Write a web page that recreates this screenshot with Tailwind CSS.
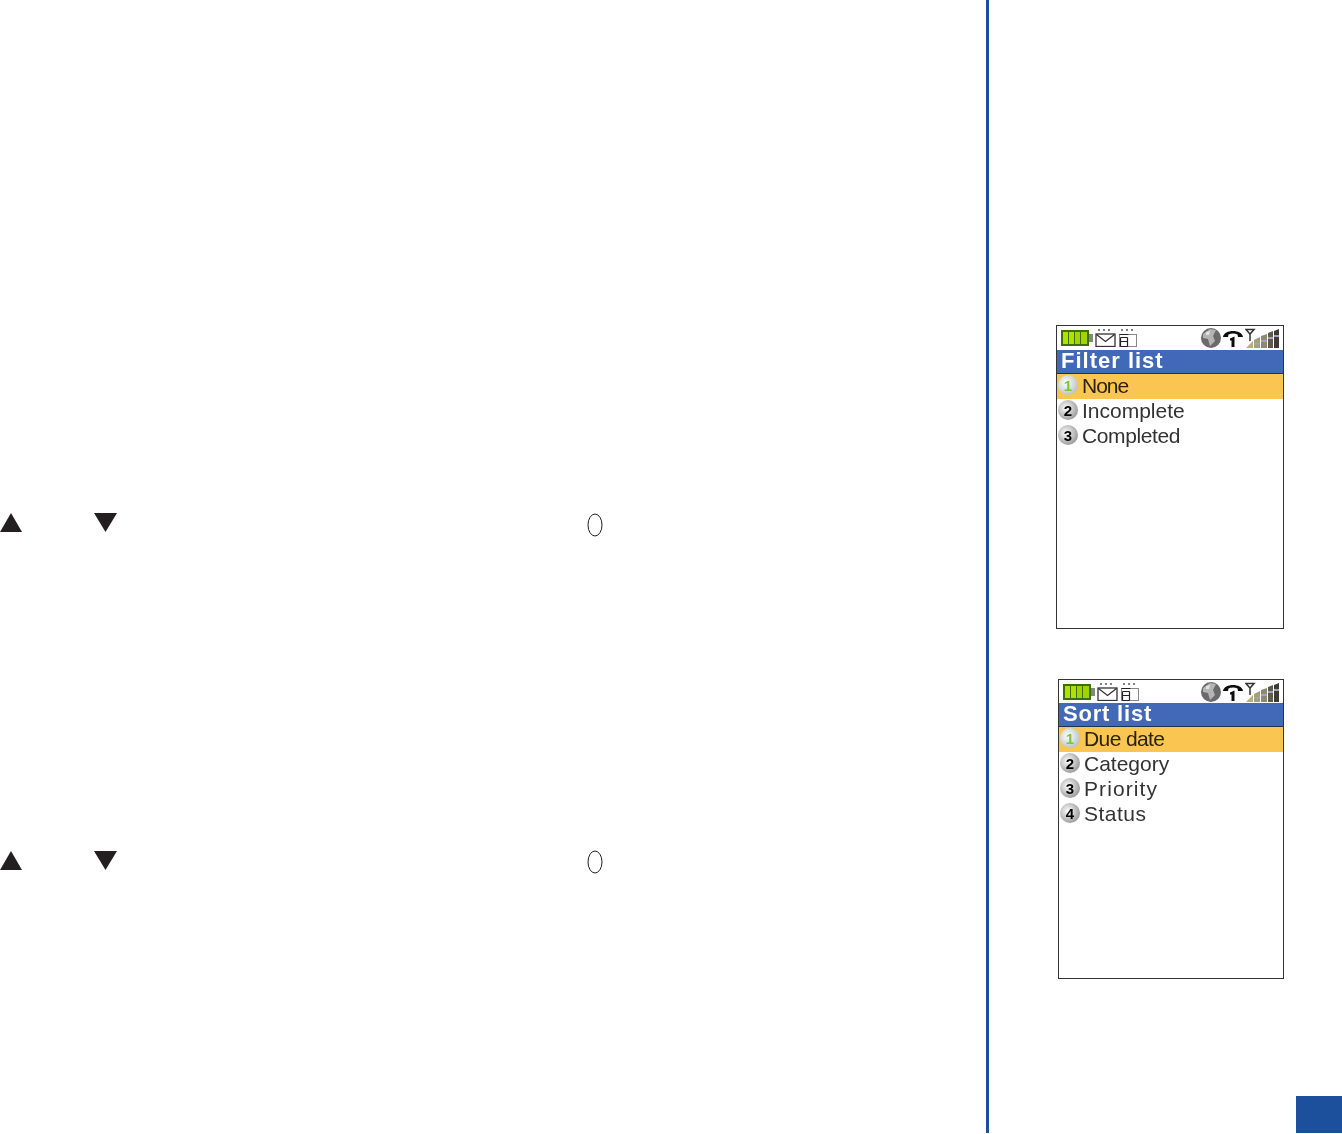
<!doctype html>
<html lang="en">
<head>
  <meta charset="UTF-8" />
  <script src="https://cdn.jsdelivr.net/npm/@tailwindcss/browser@4"></script>
  <title>Filter and sort list</title>
</head>
<body class="bg-white font-['Liberation_Sans',sans-serif]">
  <div class="flex h-[1134px] w-[1342px] overflow-hidden">

    <!-- Left column: key symbols -->
    <main class="w-[986px] shrink-0 pt-[513px]">
      <div class="flex h-[24px] items-start">
        <svg width="22" height="20" viewBox="0 0 22 20"><path d="M11 0 L22 19 L0 19 Z" fill="#231f20"/></svg>
        <svg class="ml-[72px]" width="23" height="20" viewBox="0 0 23 20"><path d="M0 0 L23 0 L11.5 19 Z" fill="#231f20"/></svg>
        <svg class="ml-[470px]" width="16" height="24" viewBox="0 0 16 24"><ellipse cx="8" cy="12" rx="7" ry="11" fill="none" stroke="#231f20" stroke-width="1"/></svg>
      </div>
      <div class="mt-[313px] flex h-[24px] items-start">
        <svg class="mt-px" width="22" height="20" viewBox="0 0 22 20"><path d="M11 0 L22 19 L0 19 Z" fill="#231f20"/></svg>
        <svg class="ml-[72px] mt-px" width="23" height="20" viewBox="0 0 23 20"><path d="M0 0 L23 0 L11.5 19 Z" fill="#231f20"/></svg>
        <svg class="ml-[470px]" width="16" height="24" viewBox="0 0 16 24"><ellipse cx="8" cy="12" rx="7" ry="11" fill="none" stroke="#231f20" stroke-width="1"/></svg>
      </div>
    </main>

    <!-- Divider -->
    <div class="mb-px w-[3px] shrink-0 bg-[#1c4f9c]"></div>

    <!-- Right column: phone screens -->
    <aside class="flex w-[353px] shrink-0 flex-col pt-[325px]">

      <!-- Filter list -->
      <section class="ml-[67px] flex h-[304px] w-[228px] flex-col border border-[#333] bg-white">
        <div class="flex h-[24px] shrink-0 items-center pl-[4px] pr-[3px] blur-[0.5px]">
          <svg width="32" height="16" viewBox="0 0 32 16"><rect x="0" y="0" width="28" height="16" fill="#3d6f10"/><rect x="2" y="2" width="5" height="12" fill="#b4e000"/><rect x="8" y="2" width="5" height="12" fill="#b4e000"/><rect x="14" y="2" width="5" height="12" fill="#a4d400"/><rect x="20" y="2" width="6" height="12" fill="#a4d400"/><rect x="28" y="4" width="4" height="8" fill="#7d8c72"/></svg>
          <svg class="ml-[2px]" width="21" height="18" viewBox="0 0 21 18"><path d="M3 1h2M8 1h2M13 1h2" stroke="#555" stroke-width="1.500"/><rect x="1" y="5" width="19" height="12.500" fill="#fff" stroke="#333" stroke-width="1.300"/><path d="M1.500 5.500 L10.500 12.500 L19.500 5.500" fill="none" stroke="#333" stroke-width="1.300"/></svg>
          <svg class="ml-[2px]" width="20" height="18" viewBox="0 0 20 18"><path d="M3 1h2M8 1h2M13 1h2" stroke="#555" stroke-width="1.500"/><rect x="1.500" y="5.500" width="17" height="12" fill="#fff" stroke="#888"/><path d="M1.500 5.500h9M2.500 8.500h7M2.500 12.500h7M2.500 17.500h7M2.500 8.500V17.500M9.500 8.500V17.500" fill="none" stroke="#222" stroke-width="1.200"/></svg>
          <svg class="ml-auto" width="20" height="20" viewBox="0 0 20 20"><circle cx="10" cy="10" r="10" fill="#6a6a6a"/><path d="M2 6 L9 1 L15 2 L12 8 L14 13 L9 18 L7 11 L2 10 Z" fill="#b4b4b4"/><path d="M5 4 L9 3 L8 7 L5 7 Z" fill="#e2e2e2"/></svg>
          <svg class="ml-[2px]" width="20" height="18" viewBox="0 0 20 18"><path d="M0 8 C1 0 19 0 20 8 L15 8 L14.500 5.500 C12 4 8 4 5.500 5.500 L5 8 Z" fill="#0c0c0c"/><path d="M7 9.500 L11.500 7.500 L11.500 18 L8.500 18 L8.500 11.500 L7 11.500 Z" fill="#0c0c0c"/></svg>
          <svg class="ml-[2px]" width="35" height="20" viewBox="0 0 35 20"><path d="M1 1.500 L9 1.500 L5 6 Z M5 6 V13" fill="none" stroke="#333" stroke-width="1.500"/><path d="M1 20 L8 13 V20 Z" fill="#b9b078"/><path d="M9 12 L15 9 V20 H9 Z" fill="#a39f78"/><path d="M9 15 H15 V16.500 H9 Z" fill="#a5a3c0"/><path d="M16 8 L22 6 V20 H16 Z" fill="#8c8a72"/><path d="M16 12 H22 V14 H16 Z" fill="#a5a3c0"/><path d="M23 5 L28 3 V20 H23 Z" fill="#5d5b4c"/><path d="M23 9 H28 V11 H23 Z" fill="#a5a3c0"/><path d="M29 3 L34 1 V20 H29 Z" fill="#3d3b32"/><path d="M29 7 H34 V9 H29 Z" fill="#a5a3c0"/></svg>
        </div>
        <h2 class="flex h-[24px] shrink-0 items-center border-b border-[#20304f] bg-[#4169b8] pb-[2px] pl-[4px] text-[22px] font-bold leading-none tracking-[1px] text-white blur-[0.4px]">Filter list</h2>
        <ul class="text-[21px] leading-none text-[#333] blur-[0.3px]">
          <li class="flex h-[25px] items-center bg-[#fac550] pb-[3px] text-[#2a2208]"><span class="ml-px mr-[4px] flex h-[20px] w-[20px] items-center justify-center rounded-full bg-radial-[at_40%_40%] from-white to-[#9fb0b0] text-[15px] font-bold text-[#79c832]">1</span><span class="tracking-[-1px]">None</span></li>
          <li class="flex h-[25px] items-center pb-[3px]"><span class="ml-px mr-[4px] flex h-[20px] w-[20px] items-center justify-center rounded-full bg-radial-[at_40%_40%] from-white to-[#777] text-[15px] font-bold text-black">2</span>Incomplete</li>
          <li class="flex h-[25px] items-center pb-[3px]"><span class="ml-px mr-[4px] flex h-[20px] w-[20px] items-center justify-center rounded-full bg-radial-[at_40%_40%] from-white to-[#777] text-[15px] font-bold text-black">3</span><span class="tracking-[-0.4px]">Completed</span></li>
        </ul>
      </section>

      <!-- Sort list -->
      <section class="ml-[69px] mt-[50px] flex h-[300px] w-[226px] flex-col border border-[#333] bg-white">
        <div class="flex h-[23px] shrink-0 items-center pl-[4px] pr-[3px] blur-[0.5px]">
          <svg width="32" height="16" viewBox="0 0 32 16"><rect x="0" y="0" width="28" height="16" fill="#3d6f10"/><rect x="2" y="2" width="5" height="12" fill="#b4e000"/><rect x="8" y="2" width="5" height="12" fill="#b4e000"/><rect x="14" y="2" width="5" height="12" fill="#a4d400"/><rect x="20" y="2" width="6" height="12" fill="#a4d400"/><rect x="28" y="4" width="4" height="8" fill="#7d8c72"/></svg>
          <svg class="ml-[2px]" width="21" height="18" viewBox="0 0 21 18"><path d="M3 1h2M8 1h2M13 1h2" stroke="#555" stroke-width="1.500"/><rect x="1" y="5" width="19" height="12.500" fill="#fff" stroke="#333" stroke-width="1.300"/><path d="M1.500 5.500 L10.500 12.500 L19.500 5.500" fill="none" stroke="#333" stroke-width="1.300"/></svg>
          <svg class="ml-[2px]" width="20" height="18" viewBox="0 0 20 18"><path d="M3 1h2M8 1h2M13 1h2" stroke="#555" stroke-width="1.500"/><rect x="1.500" y="5.500" width="17" height="12" fill="#fff" stroke="#888"/><path d="M1.500 5.500h9M2.500 8.500h7M2.500 12.500h7M2.500 17.500h7M2.500 8.500V17.500M9.500 8.500V17.500" fill="none" stroke="#222" stroke-width="1.200"/></svg>
          <svg class="ml-auto" width="20" height="20" viewBox="0 0 20 20"><circle cx="10" cy="10" r="10" fill="#6a6a6a"/><path d="M2 6 L9 1 L15 2 L12 8 L14 13 L9 18 L7 11 L2 10 Z" fill="#b4b4b4"/><path d="M5 4 L9 3 L8 7 L5 7 Z" fill="#e2e2e2"/></svg>
          <svg class="ml-[2px]" width="20" height="18" viewBox="0 0 20 18"><path d="M0 8 C1 0 19 0 20 8 L15 8 L14.500 5.500 C12 4 8 4 5.500 5.500 L5 8 Z" fill="#0c0c0c"/><path d="M7 9.500 L11.500 7.500 L11.500 18 L8.500 18 L8.500 11.500 L7 11.500 Z" fill="#0c0c0c"/></svg>
          <svg class="ml-[2px]" width="35" height="20" viewBox="0 0 35 20"><path d="M1 1.500 L9 1.500 L5 6 Z M5 6 V13" fill="none" stroke="#333" stroke-width="1.500"/><path d="M1 20 L8 13 V20 Z" fill="#b9b078"/><path d="M9 12 L15 9 V20 H9 Z" fill="#a39f78"/><path d="M9 15 H15 V16.500 H9 Z" fill="#a5a3c0"/><path d="M16 8 L22 6 V20 H16 Z" fill="#8c8a72"/><path d="M16 12 H22 V14 H16 Z" fill="#a5a3c0"/><path d="M23 5 L28 3 V20 H23 Z" fill="#5d5b4c"/><path d="M23 9 H28 V11 H23 Z" fill="#a5a3c0"/><path d="M29 3 L34 1 V20 H29 Z" fill="#3d3b32"/><path d="M29 7 H34 V9 H29 Z" fill="#a5a3c0"/></svg>
        </div>
        <h2 class="flex h-[24px] shrink-0 items-center border-b border-[#20304f] bg-[#4169b8] pb-[2px] pl-[4px] text-[22px] font-bold leading-none tracking-[0.8px] text-white blur-[0.4px]">Sort list</h2>
        <ul class="text-[21px] leading-none text-[#333] blur-[0.3px]">
          <li class="flex h-[25px] items-center bg-[#fac550] pb-[3px] text-[#2a2208]"><span class="ml-px mr-[4px] flex h-[20px] w-[20px] items-center justify-center rounded-full bg-radial-[at_40%_40%] from-white to-[#9fb0b0] text-[15px] font-bold text-[#79c832]">1</span><span class="tracking-[-0.6px]">Due date</span></li>
          <li class="flex h-[25px] items-center pb-[3px]"><span class="ml-px mr-[4px] flex h-[20px] w-[20px] items-center justify-center rounded-full bg-radial-[at_40%_40%] from-white to-[#777] text-[15px] font-bold text-black">2</span>Category</li>
          <li class="flex h-[25px] items-center pb-[3px]"><span class="ml-px mr-[4px] flex h-[20px] w-[20px] items-center justify-center rounded-full bg-radial-[at_40%_40%] from-white to-[#777] text-[15px] font-bold text-black">3</span><span class="tracking-[1.1px]">Priority</span></li>
          <li class="flex h-[25px] items-center pb-[3px]"><span class="ml-px mr-[4px] flex h-[20px] w-[20px] items-center justify-center rounded-full bg-radial-[at_40%_40%] from-white to-[#777] text-[15px] font-bold text-black">4</span><span class="tracking-[0.5px]">Status</span></li>
        </ul>
      </section>

      <!-- Page tab -->
      <div class="mb-px mt-auto h-[37px] w-[46px] self-end bg-[#1c4f9c]"></div>
    </aside>
  </div>
</body>
</html>
